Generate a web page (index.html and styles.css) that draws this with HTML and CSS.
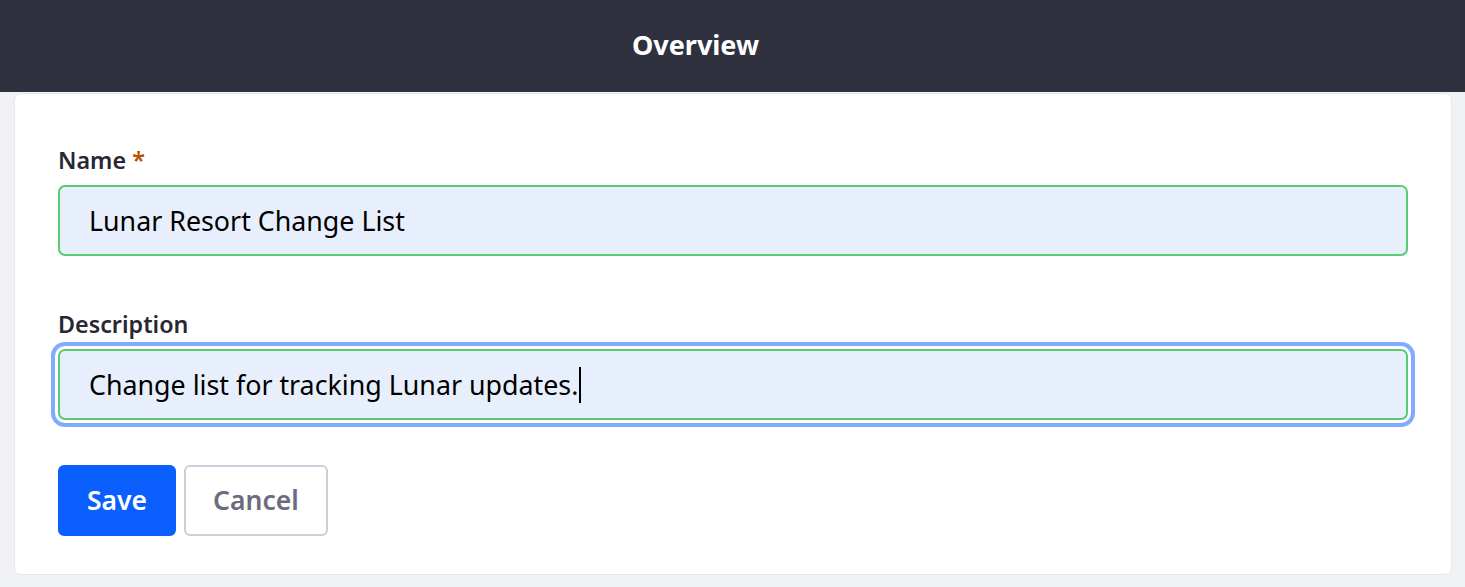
FILE: index.html
```html
<!DOCTYPE html>
<html lang="en">
<head>
<meta charset="utf-8">
<title>Overview</title>
<link rel="stylesheet" href="styles.css">
</head>
<body>
<header class="topbar">
  <h1 class="topbar-title">Overview</h1>
</header>
<main class="page">
  <form class="card">
    <div class="field">
      <label class="field-label">Name <span class="required">*</span></label>
      <div class="field-input">Lunar Resort Change List</div>
    </div>
    <div class="field">
      <label class="field-label">Description</label>
      <div class="field-input is-focused">Change list for tracking Lunar updates.<span class="caret"></span></div>
    </div>
    <div class="actions">
      <button type="button" class="btn btn-primary">Save</button>
      <button type="button" class="btn btn-secondary">Cancel</button>
    </div>
  </form>
</main>
</body>
</html>
```

FILE: styles.css
```css
* { box-sizing: border-box; }
html, body {
  margin: 0;
  padding: 0;
  background: #f1f2f5;
  font-family: "Noto Sans", "Open Sans", sans-serif;
  color: #272833;
}
.topbar {
  height: 92px;
  background: #30313f;
  display: flex;
  align-items: center;
  justify-content: center;
  padding-right: 74px;
}
.topbar-title {
  margin: 0;
  color: #fff;
  font-size: 27px;
  font-weight: 700;
  line-height: 1;
  padding-bottom: 4px;
}
.page {
  padding: 1px 13px 13px 14px;
}
.card {
  background: #fff;
  border: 1px solid #e7e7ed;
  border-radius: 7px;
  padding: 52px 43px 38px 43px;
}
.field {
  display: flex;
  flex-direction: column;
}
.field + .field { margin-top: 54px; }
.field-label {
  font-size: 23.3px;
  line-height: 28px;
  font-weight: 600;
  color: #272833;
  margin-bottom: 11px;
}
.required { color: #b95000; }
.field-input {
  height: 71px;
  background: #e8effc;
  border: 2px solid #5aca75;
  border-radius: 7px;
  padding: 0 29px;
  display: flex;
  align-items: center;
  font-size: 26.8px;
  color: #000;
  white-space: nowrap;
}
.field-input.is-focused {
  box-shadow: 0 0 0 3px #fff, 0 0 0 7px #80acff;
}
.caret {
  display: inline-block;
  width: 2px;
  height: 36px;
  background: #000;
  margin-left: 1px;
}
.actions {
  display: flex;
  gap: 8px;
  margin-top: 45px;
}
.btn {
  height: 71px;
  border-radius: 6px;
  border: 2px solid transparent;
  padding: 0 27px;
  font-family: inherit;
  font-size: 26.5px;
  font-weight: 600;
  line-height: 1;
  cursor: pointer;
}
.btn-primary {
  background: #0b5fff;
  border-color: #0b5fff;
  color: #fff;
}
.btn-secondary {
  background: #fff;
  border-color: #cdced9;
  color: #6b6c7e;
}
```
